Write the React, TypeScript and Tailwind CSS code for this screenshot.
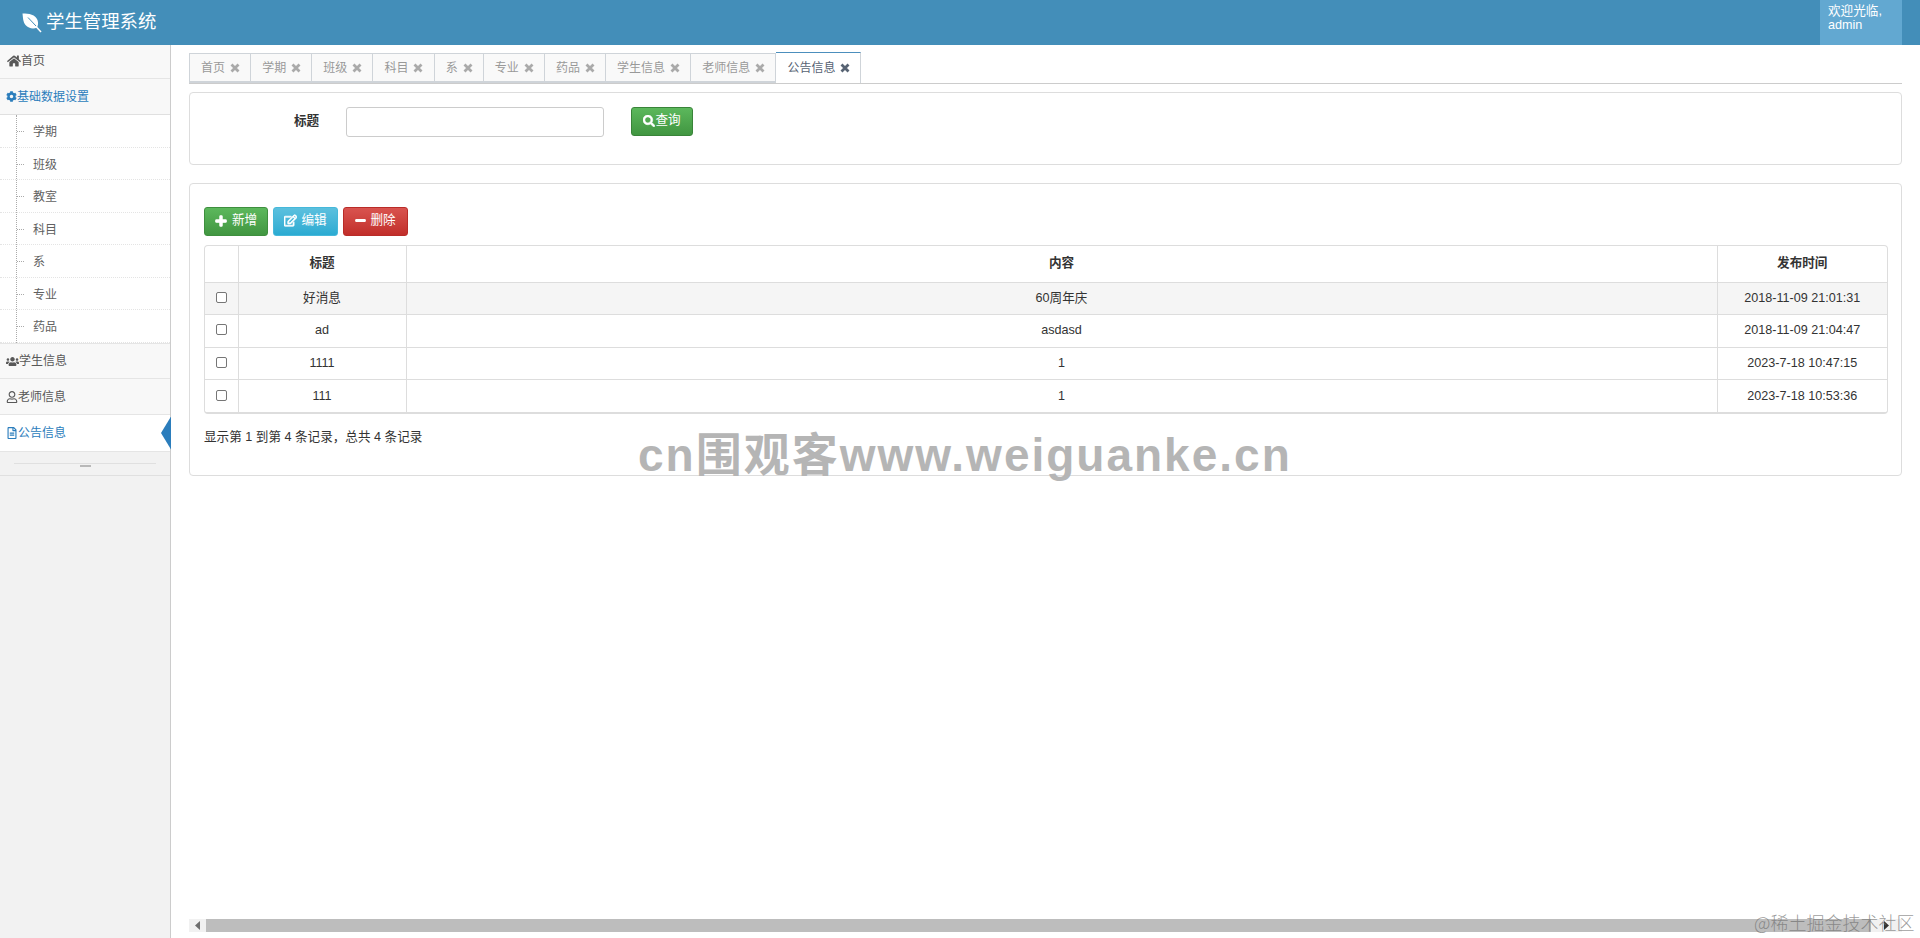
import { FaHome, FaCog, FaUsers, FaRegUser, FaRegFileAlt, FaPlus, FaMinus, FaSearch, FaRegEdit } from 'react-icons/fa';

const subMenus = ['学期', '班级', '教室', '科目', '系', '专业', '药品'];
const tabs = ['首页', '学期', '班级', '科目', '系', '专业', '药品', '学生信息', '老师信息'];
const rows = [
  { title: '好消息', content: '60周年庆', time: '2018-11-09 21:01:31' },
  { title: 'ad', content: 'asdasd', time: '2018-11-09 21:04:47' },
  { title: '1111', content: '1', time: '2023-7-18 10:47:15' },
  { title: '111', content: '1', time: '2023-7-18 10:53:36' },
];

function Leaf() {
  return (
    <svg width="20" height="20" viewBox="0 0 20 20" className="shrink-0">
      <path d="M.5.5C7 .5 13.500 1.500 15.500 7c1 3 .5 5.500-.5 7.500-3.500 1.800-8.500 1-11.500-2.500C1 9 1 4.500.5.500Z" fill="#fff" />
      <path d="M6 4.500 14 13" stroke="#438eb9" strokeWidth="1" fill="none" />
      <path d="M14 13.500 19 19" stroke="#fff" strokeWidth="1.500" fill="none" />
    </svg>
  );
}

// 标签页上的粗叉号
function CloseX({ color }: { color: string }) {
  return (
    <svg width="10" height="10" viewBox="0 0 10 10" className="shrink-0">
      <path d="M1.500 1.500 8.500 8.500M8.500 1.500 1.500 8.500" stroke={color} strokeWidth="2.800" fill="none" />
    </svg>
  );
}

function Sidebar() {
  return (
    <aside className="w-[171px] shrink-0 border-r border-[#cccccc] bg-[#f2f2f2] text-[12px]">
      <div className="flex h-[34px] items-center border-b border-[#e5e5e5] bg-[#f8f8f8] pb-[2px] pl-[7px] text-[#585858]">
        <FaHome className="text-[14px]" />
        <span>首页</span>
      </div>
      <div className="flex h-[36px] items-center border-b border-[#e0e0e0] bg-[#f8f8f8] pl-[6px] text-[#2b7dbc]">
        <FaCog className="text-[11px]" />
        <span>基础数据设置</span>
      </div>
      <div className="relative bg-white">
        <div className="absolute bottom-0 left-[16px] top-0 border-l border-dotted border-[#aaaaaa]" />
        {subMenus.map((name) => (
          <div key={name} className="relative flex h-[32.5px] items-center border-b border-dotted border-[#e4e4e4] pl-[33px] pt-[3px] text-[#616161]">
            <span className="absolute left-[17px] top-[16px] w-[7px] border-t border-dotted border-[#aaaaaa]" />
            {name}
          </div>
        ))}
      </div>
      <div className="flex h-[36px] items-center border-y border-[#e5e5e5] bg-[#f8f8f8] pl-[6px] pt-[1px] text-[#585858]">
        <FaUsers className="text-[13px]" />
        <span>学生信息</span>
      </div>
      <div className="flex h-[36px] items-center border-b border-[#e5e5e5] bg-[#f8f8f8] pl-[6px] pt-[1px] text-[#585858]">
        <FaRegUser className="text-[12px]" />
        <span>老师信息</span>
      </div>
      <div className="relative flex h-[37px] items-center border-b border-[#e5e5e5] bg-white pl-[6px] text-[#2b7dbc]">
        <FaRegFileAlt className="text-[12px]" />
        <span>公告信息</span>
        <span className="absolute right-[-1px] top-[2px] h-[33px] w-[10px] bg-[#2b7dbc] [clip-path:polygon(100%_0,100%_100%,0_50%)]" />
      </div>
      <div className="relative flex h-[24px] items-center border-b border-[#e0e0e0] px-[14px]">
        <div className="w-full border-t border-[#e0e0e0]" />
        <span className="absolute left-[80px] top-[13px] h-[2px] w-[11px] bg-[#b8b8b8]" />
      </div>
    </aside>
  );
}

function TabBar() {
  return (
    <div className="flex h-[31px] items-end border-b border-[#cccccc] text-[12px]">
      {tabs.map((name) => (
        <div key={name} className="flex h-[30px] items-center gap-[5px] border border-b-[2px] border-l-0 border-[#cfd4d9] bg-[#f9f9f9] pl-[11px] pr-[10.15px] text-[#999999] first:border-l">
          <span>{name}</span>
          <CloseX color="#aaaaaa" />
        </div>
      ))}
      <div className="flex h-[31px] items-center gap-[5px] border border-b-0 border-l-0 border-t-[#4c8fbd] border-r-[#cfd4d9] bg-white pl-[11px] pr-[10px] text-[#576373]">
        <span>公告信息</span>
        <CloseX color="#576373" />
      </div>
    </div>
  );
}

function SearchPanel() {
  return (
    <div className="mt-2 flex h-[73px] items-start rounded border border-[#dddddd] pt-[14px]">
      <label className="ml-[104px] mt-[5px] w-[26px] font-bold text-[#333333]">标题</label>
      <input className="ml-[26px] h-[30px] w-[258px] rounded-[3px] border border-[#cccccc] bg-white" />
      <button className="ml-[27px] flex h-[29px] w-[62px] items-center justify-center rounded-[3px] border border-[#398439] bg-gradient-to-b from-[#5cb85c] to-[#419641] pb-[2px] text-white">
        <FaSearch className="text-[12px]" stroke="currentColor" strokeWidth={24} />
        <span>查询</span>
      </button>
    </div>
  );
}

function NoticePanel() {
  return (
    <div className="mt-[18px] h-[293px] rounded border border-[#dddddd] pl-[14px] pr-[13px] pt-[23px]">
      <div className="flex gap-[5px]">
        <button className="flex h-[29px] w-[64px] items-center justify-center gap-[5px] rounded-[3px] border border-[#3e8f3e] bg-gradient-to-b from-[#5cb85c] to-[#419641] pb-[2px] text-white">
          <FaPlus className="text-[12px]" stroke="currentColor" strokeWidth={50} />
          <span>新增</span>
        </button>
        <button className="flex h-[29px] w-[65px] items-center justify-center gap-[4px] rounded-[3px] border border-[#46b8da] bg-gradient-to-b from-[#5bc0de] to-[#2aabd2] pb-[2px] text-white">
          <FaRegEdit className="text-[13px]" stroke="currentColor" strokeWidth={30} />
          <span>编辑</span>
        </button>
        <button className="flex h-[29px] w-[65px] items-center justify-center gap-[4px] rounded-[3px] border border-[#b92c28] bg-gradient-to-b from-[#d9534f] to-[#c12e2a] pb-[2px] text-white">
          <FaMinus className="text-[11px]" stroke="currentColor" strokeWidth={50} />
          <span>删除</span>
        </button>
      </div>
      <div className="mt-[9px] overflow-hidden rounded border border-b-2 border-[#dddddd]">
        <table className="w-full table-fixed border-collapse text-center text-[#333333]">
          <colgroup>
            <col className="w-[33px]" />
            <col className="w-[168px]" />
            <col />
            <col className="w-[170px]" />
          </colgroup>
          <thead>
            <tr className="h-[36px] font-bold">
              <th className="border-b border-[#dddddd]" />
              <th className="border-b border-l border-[#dddddd]">标题</th>
              <th className="border-b border-l border-[#dddddd]">内容</th>
              <th className="border-b border-l border-[#dddddd]">发布时间</th>
            </tr>
          </thead>
          <tbody>
            {rows.map((row, i) => (
              <tr key={i} className={i === 0 ? 'h-[32.5px] bg-[#f5f5f5]' : 'h-[32.5px] bg-white'}>
                <td className="border-t border-[#dddddd]">
                  <input type="checkbox" className="mx-auto mb-[2px] block h-[11px] w-[11px] appearance-none rounded-[2px] border border-[#767676] bg-white" />
                </td>
                <td className="border-l border-t border-[#dddddd]">{row.title}</td>
                <td className="border-l border-t border-[#dddddd]">{row.content}</td>
                <td className="border-l border-t border-[#dddddd]">{row.time}</td>
              </tr>
            ))}
          </tbody>
        </table>
      </div>
      <p className="mt-[14px] text-[#333333]">显示第 1 到第 4 条记录，总共 4 条记录</p>
    </div>
  );
}

export default function App() {
  return (
    <div className="relative flex h-[938px] w-[1920px] flex-col overflow-hidden bg-white text-[12.6px] font-['Liberation_Sans','Noto_Sans_CJK_SC',sans-serif]">
      {/* 顶部导航 */}
      <header className="flex h-[45px] shrink-0 items-start justify-between bg-[#438eb9] text-white">
        <div className="ml-[22px] flex h-full items-center gap-[4px]">
          <Leaf />
          <span className="text-[18.4px] leading-none">学生管理系统</span>
        </div>
        <div className="mr-[18px] h-full w-[82px] bg-[#62a8d1] pl-[8px] pt-[4px] leading-[14px]">
          <div>欢迎光临,</div>
          <div>admin</div>
        </div>
      </header>

      <div className="flex min-h-0 flex-1">
        <Sidebar />
        <main className="relative min-w-0 flex-1 pl-[18px] pr-[18px] pt-[8px]">
          <TabBar />
          <SearchPanel />
          <NoticePanel />
          {/* 横向滚动条 */}
          <div className="absolute bottom-[6px] left-[18px] right-[18px] flex h-[13px] items-center bg-[#f1f1f1]">
            <span className="flex w-[17px] justify-center">
              <span className="h-[9px] w-[5px] bg-[#6e6e6e] [clip-path:polygon(100%_0,100%_100%,0_50%)]" />
            </span>
            <span className="h-full flex-1 bg-[#bdbdbd]" />
            <span className="flex w-[31px] justify-center">
              <span className="h-[9px] w-[5px] bg-[#333333] [clip-path:polygon(0_0,100%_50%,0_100%)]" />
            </span>
          </div>
        </main>
      </div>

      {/* 水印 */}
      <div className="pointer-events-none absolute left-[638px] top-[425px] whitespace-nowrap text-[46px] font-bold leading-[60px] tracking-[2px] text-[#b5b5b5]">
        cn围观客www.weiguanke.cn
      </div>
      <div className="pointer-events-none absolute left-[1754px] top-[911px] whitespace-nowrap font-['Noto_Sans_CJK_SC',serif] text-[18px] font-light leading-[22px] text-[#6f6f6f]/70">
        @稀土掘金技术社区
      </div>
    </div>
  );
}
